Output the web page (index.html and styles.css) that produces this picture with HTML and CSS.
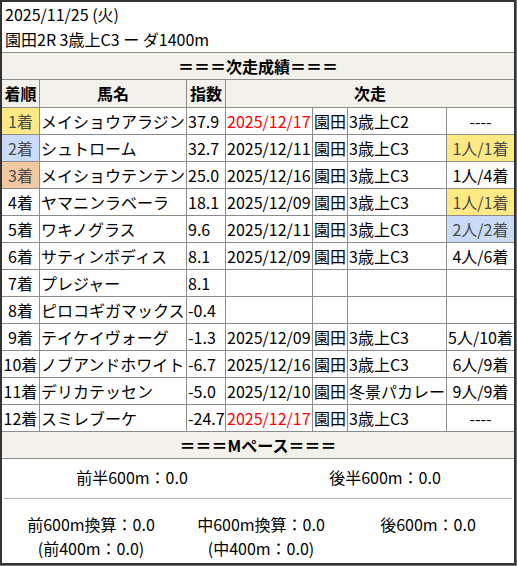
FILE: index.html
```html
<!DOCTYPE html>
<html lang="ja">
<head>
<meta charset="utf-8">
<title>次走成績</title>
<link rel="stylesheet" href="styles.css">
</head>
<body>
<div class="card">
  <div class="title">
    <div>2025/11/25 (火)</div>
    <div>園田2R 3歳上C3 ー ダ1400m</div>
  </div>
  <div class="grid">
    <div class="sec all">＝＝＝次走成績＝＝＝</div>
    <div class="th">着順</div><div class="th">馬名</div><div class="th">指数</div><div class="th next">次走</div>

    <div class="c rank gold">1着</div><div class="c">メイショウアラジン</div><div class="c">37.9</div><div class="c red">2025/12/17</div><div class="c">園田</div><div class="c">3歳上C2</div><div class="c ctr">----</div>
    <div class="c rank silver">2着</div><div class="c">シュトローム</div><div class="c">32.7</div><div class="c">2025/12/11</div><div class="c">園田</div><div class="c">3歳上C3</div><div class="c ctr gold">1人/1着</div>
    <div class="c rank bronze">3着</div><div class="c">メイショウテンテン</div><div class="c">25.0</div><div class="c">2025/12/16</div><div class="c">園田</div><div class="c">3歳上C3</div><div class="c ctr">1人/4着</div>
    <div class="c rank">4着</div><div class="c">ヤマニンラベーラ</div><div class="c">18.1</div><div class="c">2025/12/09</div><div class="c">園田</div><div class="c">3歳上C3</div><div class="c ctr gold">1人/1着</div>
    <div class="c rank">5着</div><div class="c">ワキノグラス</div><div class="c">9.6</div><div class="c">2025/12/11</div><div class="c">園田</div><div class="c">3歳上C3</div><div class="c ctr silver">2人/2着</div>
    <div class="c rank">6着</div><div class="c">サティンボディス</div><div class="c">8.1</div><div class="c">2025/12/09</div><div class="c">園田</div><div class="c">3歳上C3</div><div class="c ctr">4人/6着</div>
    <div class="c rank">7着</div><div class="c">プレジャー</div><div class="c">8.1</div><div class="c"></div><div class="c"></div><div class="c"></div><div class="c"></div>
    <div class="c rank">8着</div><div class="c">ピロコギガマックス</div><div class="c">-0.4</div><div class="c"></div><div class="c"></div><div class="c"></div><div class="c"></div>
    <div class="c rank">9着</div><div class="c">テイケイヴォーグ</div><div class="c">-1.3</div><div class="c">2025/12/09</div><div class="c">園田</div><div class="c">3歳上C3</div><div class="c ctr">5人/10着</div>
    <div class="c rank">10着</div><div class="c">ノブアンドホワイト</div><div class="c">-6.7</div><div class="c">2025/12/16</div><div class="c">園田</div><div class="c">3歳上C3</div><div class="c ctr">6人/9着</div>
    <div class="c rank">11着</div><div class="c">デリカテッセン</div><div class="c">-5.0</div><div class="c">2025/12/10</div><div class="c">園田</div><div class="c">冬景パカレー</div><div class="c ctr">9人/9着</div>
    <div class="c rank">12着</div><div class="c">スミレブーケ</div><div class="c">-24.7</div><div class="c red">2025/12/17</div><div class="c">園田</div><div class="c">3歳上C3</div><div class="c ctr">----</div>

    <div class="sec all">＝＝＝Mペース＝＝＝</div>
  </div>
  <div class="pace">
    <div class="halves">
      <div>前半600m：0.0</div>
      <div>後半600m：0.0</div>
    </div>
    <hr class="sep">
    <div class="thirds">
      <div>前600m換算：0.0<br>(前400m：0.0)</div>
      <div>中600m換算：0.0<br>(中400m：0.0)</div>
      <div>後600m：0.0</div>
    </div>
  </div>
</div>
</body>
</html>
```

FILE: styles.css
```css
html, body {
  margin: 0;
  padding: 0;
}
body {
  background: #767676;
  font-family: "Noto Sans CJK JP", "Noto Sans", sans-serif;
  font-size: 16px;
  color: #000;
}
.card {
  width: 512px;
  border: 2px solid #333;
  background: #fff;
}
.title {
  height: 50px;
  padding-left: 3px;
  line-height: 25px;
  box-sizing: border-box;
}
.grid {
  display: grid;
  grid-template-columns: 37px 146px 38px 86px 34px 98px 67px;
  grid-template-rows: 26px 27px repeat(12, 26px) 26px;
  gap: 1px;
  background: #8c8c8c;
  border-top: 1px solid #8c8c8c;
  border-bottom: 1px solid #8c8c8c;
}
.grid > div {
  background: #fff;
  line-height: 26px;
  white-space: nowrap;
  overflow: hidden;
}
.grid > .sec {
  background: #f2f1ec;
  font-weight: bold;
  text-align: center;
}
.all {
  grid-column: 1 / -1;
}
.grid > .th {
  font-weight: bold;
  text-align: center;
  line-height: 27px;
  background: #f2f1ec;
}
.next {
  grid-column: 4 / 8;
}
.c {
  padding: 0 1px;
}
.rank, .ctr {
  text-align: center;
}
.red {
  color: #ff0000;
}
.grid > .gold {
  background: #ffe984;
  color: #4a4a4a;
}
.grid > .silver {
  background: #c9dbf7;
  color: #4a4a4a;
}
.grid > .bronze {
  background: #f0c9a3;
  color: #4a4a4a;
}
.pace {
  height: 104px;
  box-sizing: border-box;
  padding-top: 5px;
}
.halves {
  display: grid;
  grid-template-columns: 260px 246px;
  line-height: 26px;
  text-align: center;
}
.sep {
  margin: 8px 2px 0;
  border: 0;
  border-top: 1px solid #b4b4b4;
  height: 0;
}
.thirds {
  display: grid;
  grid-template-columns: 178px 162px 172px;
  margin-top: 13px;
  line-height: 24px;
  text-align: center;
}
```
